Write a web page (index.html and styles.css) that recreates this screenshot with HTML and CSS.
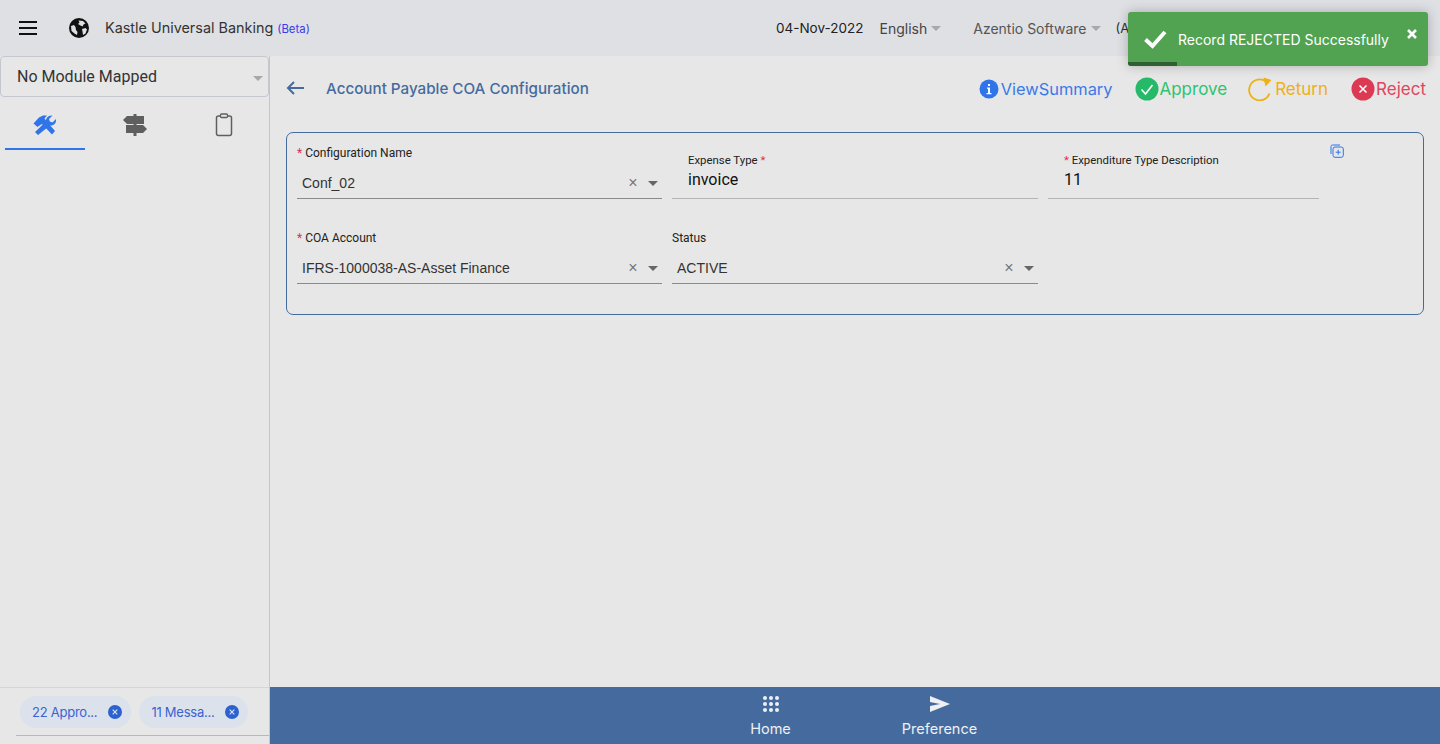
FILE: index.html
```html
<!DOCTYPE html>
<html lang="en">
<head>
<meta charset="utf-8">
<title>Account Payable COA Configuration</title>
<link rel="stylesheet" href="styles.css">
</head>
<body>
<header class="topbar">
  <button class="hamburger" aria-label="Menu"><span></span><span></span><span></span></button>
  <svg class="globe" viewBox="0 0 20 20" width="20" height="20"><circle cx="10" cy="10" r="10" fill="#111"/><path d="M2 8l3-1 1.500 2 .5 3 1.500 2-.5 3-2.500-1.500L2.500 13zM9.500 2.500l4.500.5 2.500 2.500-2 1-1 2-2-1-2.500-1.500 1.500-1.500zM13 11l3.500-1 1.500 1.500-1.500 4-2.500 1.500-.5-3.500z" fill="#dfe0e4"/></svg>
  <div class="brand">Kastle Universal Banking <span class="beta">(Beta)</span></div>
  <div class="topright">
    <span class="date">04-Nov-2022</span>
    <span class="lang">English<i class="caret"></i></span>
    <span class="org">Azentio Software<i class="caret"></i></span>
    <span class="more">(A</span>
  </div>
</header>
<div class="toast">
  <svg class="tick" viewBox="0 0 24 20" width="24" height="20"><path d="M2.500 10.500l7 6.500L22 3" fill="none" stroke="#fff" stroke-width="4"/></svg>
  <span class="toast-text">Record REJECTED Successfully</span>
  <svg class="toast-x" viewBox="0 0 10 10" width="10" height="10"><path d="M1 1l8 8M9 1l-8 8" stroke="#fff" stroke-width="2.600"/></svg>
  <div class="toast-progress"></div>
</div>
<div class="layout">
  <aside class="sidebar">
    <div class="module">No Module Mapped<i class="caret caret-module"></i></div>
    <nav class="tabs">
      <div class="tab tab-active">
        <svg viewBox="0 0 24 22" width="24" height="22"><g fill="#2f74e8"><path d="M0.500 9.500L6 3.500 10 1.500 14 1.500 11.500 4.500 13 6.500 22 17 19 20.500 9 10 6.500 11.500 4.500 13z"/><path d="M5 21l-3-3L13 7.500c-.5-3 2-6.500 6.500-6L16 5l.8 2.600 2.700.8L23 5c.8 4-2.500 7-6 6.500z"/></g></svg>
      </div>
      <div class="tab">
        <svg viewBox="0 0 24 22" width="24" height="22"><path fill="#5f5f5f" d="M10.500 0h3v2H21v8h-7.500v1H20l4 4-4 4h-6.500v3h-3v-3H3v-8h7.500v-1H4L0 6l4-4h6.500z"/></svg>
      </div>
      <div class="tab tab-clip">
        <svg viewBox="0 0 18 24" width="18" height="24"><rect x="1.500" y="3" width="15" height="19.500" rx="2" fill="none" stroke="#5f5f5f" stroke-width="1.500"/><rect x="5.500" y="1" width="7" height="3.500" rx="1" fill="#e7e7e7" stroke="#5f5f5f" stroke-width="1.300"/></svg>
      </div>
    </nav>
    <div class="side-spacer"></div>
    <div class="chips">
      <span class="chip">22 Appro...<i class="chip-x"><svg viewBox="0 0 6 6" width="6" height="6"><path d="M.7.7l4.600 4.600M5.300.7L.7 5.300" stroke="#dbe2ec" stroke-width="1.200"/></svg></i></span>
      <span class="chip">11 Messa...<i class="chip-x"><svg viewBox="0 0 6 6" width="6" height="6"><path d="M.7.7l4.600 4.600M5.300.7L.7 5.300" stroke="#dbe2ec" stroke-width="1.200"/></svg></i></span>
    </div>
  </aside>
  <div class="main">
    <section class="content">
      <div class="titlebar">
        <svg class="back" viewBox="0 0 18 14" width="18" height="14"><path d="M18 7H2M8 1L2 7l6 6" fill="none" stroke="#456b9e" stroke-width="2"/></svg>
        <h1 class="title">Account Payable COA Configuration</h1>
        <div class="actions">
          <span class="action a-blue"><svg viewBox="0 0 20 20" width="20" height="20"><circle cx="10" cy="10" r="9.500" fill="#2f74e8"/><path d="M8 8.500h3V14h1.500v1.300h-5V14H9V9.800H8zM9 5h2v2H9z" fill="#fff"/></svg>ViewSummary</span>
          <span class="action a-green"><svg viewBox="0 0 24 24" width="24" height="24"><circle cx="12" cy="12" r="11.500" fill="#25b968"/><path d="M6.500 12.500l4 4.500 7-9" fill="none" stroke="#fff" stroke-width="1.600"/></svg>Approve</span>
          <span class="action a-amber"><svg viewBox="0 0 24 24" width="24" height="24"><path d="M21 16A10.500 10.500 0 1 1 17.500 4" fill="none" stroke="#eeb111" stroke-width="1.800" transform="translate(.5 .5)"/><path d="M15.500 .5l8 2.500-6 6.500z" fill="#eeb111"/></svg>Return</span>
          <span class="action a-red"><svg viewBox="0 0 24 24" width="24" height="24"><circle cx="12" cy="12" r="11.500" fill="#dc3a52"/><path d="M8.500 8.500l7 7M15.500 8.500l-7 7" stroke="#fff" stroke-width="1.500"/></svg>Reject</span>
        </div>
      </div>
      <form class="panel">
        <svg class="copy" viewBox="0 0 14 14" width="14" height="14"><rect x="3" y="3" width="10.300" height="10.300" rx="2" fill="#e7e7e7" stroke="#2f74e8"/><path d="M1 10V2.500A1.500 1.500 0 0 1 2.500 1H10M8.200 5.700v5M5.700 8.200h5" fill="none" stroke="#2f74e8"/></svg>
        <div class="field select">
          <label class="lbl"><b class="req">*</b> Configuration Name</label>
          <div class="ctl"><span class="val">Conf_02</span><span class="x">×</span><i class="arrow"></i></div>
        </div>
        <div class="field text">
          <label class="lbl">Expense Type <b class="req">*</b></label>
          <div class="ctl"><span class="val-big">invoice</span></div>
        </div>
        <div class="field text text-last">
          <label class="lbl"><b class="req">*</b> Expenditure Type Description</label>
          <div class="ctl"><span class="val-big">11</span></div>
        </div>
        <div class="field select">
          <label class="lbl"><b class="req">*</b> COA Account</label>
          <div class="ctl"><span class="val">IFRS-1000038-AS-Asset Finance</span><span class="x">×</span><i class="arrow"></i></div>
        </div>
        <div class="field select">
          <label class="lbl">Status</label>
          <div class="ctl"><span class="val">ACTIVE</span><span class="x">×</span><i class="arrow"></i></div>
        </div>
      </form>
    </section>
    <footer class="bottombar">
      <div class="bottom-item">
        <svg viewBox="0 0 18 18" width="18" height="18" fill="#eef0f3"><circle cx="3" cy="3" r="2"/><circle cx="9" cy="3" r="2"/><circle cx="15" cy="3" r="2"/><circle cx="3" cy="9" r="2"/><circle cx="9" cy="9" r="2"/><circle cx="15" cy="9" r="2"/><circle cx="3" cy="15" r="2"/><circle cx="9" cy="15" r="2"/><circle cx="15" cy="15" r="2"/></svg>
        <span>Home</span>
      </div>
      <div class="bottom-item">
        <svg viewBox="0 0 22 18" width="22" height="18" fill="#eef0f3"><path d="M1 1l20 8-20 8v-6l10-2-10-2z"/></svg>
        <span>Preference</span>
      </div>
    </footer>
  </div>
</div>
</body>
</html>
```
FILE: styles.css
```css
* { box-sizing: border-box; }
html, body { height: 100%; }
body {
  margin: 0;
  height: 744px;
  overflow: hidden;
  background: #e7e7e7;
  font-family: Roboto, "Liberation Sans", sans-serif;
  color: #222;
  display: flex;
  flex-direction: column;
}
.topbar {
  height: 56px;
  flex: none;
  background: #dfe0e4;
  display: flex;
  align-items: center;
  padding-left: 19px;
  overflow: hidden;
}
.hamburger {
  width: 18px;
  height: 14px;
  padding: 0;
  border: 0;
  background: none;
  display: flex;
  flex-direction: column;
  justify-content: space-between;
  margin-right: 32px;
}
.hamburger span { display: block; height: 2px; background: #111; }
.globe { margin-right: 16px; }
.brand { font-family: Inter, sans-serif; font-size: 14.400px; color: #333; margin-bottom: 2px; }
.beta { font-size: 11.400px; color: #3a3aea; }
.topright {
  margin-left: auto;
  display: flex;
  align-items: center;
  font-family: Inter, sans-serif;
  font-size: 14px;
  color: #444;
  white-space: nowrap;
  width: 664px;
}
.date { color: #222; font-size: 13.500px; margin-right: 16px; }
.lang { margin-right: 32px; }
.org { color: #555; margin-right: 15px; }
.more { color: #333; font-size: 13px; }
.caret {
  display: inline-block;
  width: 0;
  height: 0;
  border: 5px solid transparent;
  border-top-color: #a8a8aa;
  border-bottom-width: 0;
  margin-left: 4px;
  vertical-align: 3px;
}
.toast {
  position: absolute;
  left: 1128px;
  top: 12px;
  width: 300px;
  height: 54px;
  background: #51a351;
  border-radius: 3px;
  box-shadow: 0 0 12px rgba(0,0,0,.25);
  color: #fff;
  overflow: hidden;
  z-index: 5;
}
.tick { position: absolute; left: 15px; top: 17px; }
.toast-text { position: absolute; left: 50px; top: 18px; font-size: 14px; line-height: 20px; font-family: Inter, sans-serif; white-space: nowrap; }
.toast-x { position: absolute; left: 279px; top: 17px; }
.toast-progress { position: absolute; left: 0; bottom: 0; height: 4px; width: 49px; background: #2f5f33; }
.layout { flex: 1; display: flex; min-height: 0; }
.sidebar {
  width: 270px;
  flex: none;
  border-right: 1px solid #c6c6c8;
  display: flex;
  flex-direction: column;
}
.module {
  height: 41px;
  border: 1px solid #c4c7ce;
  border-radius: 4px;
  display: flex;
  align-items: center;
  padding-left: 16px;
  font-size: 16px;
  color: #333;
  width: 269px;
  position: relative;
}
.caret-module { position: absolute; right: 5px; top: 19px; margin: 0; }
.tabs { display: flex; padding: 0 0 0 5px; margin-top: 3px; }
.tab {
  flex: none;
  width: 80px;
  height: 50px;
  margin-right: 10px;
  display: flex;
  align-items: center;
  justify-content: center;
  padding-top: 2px;
  border-bottom: 2px solid transparent;
}
.tab-clip svg { margin-right: 2px; }
.tab-active { border-bottom-color: #2f74e8; }
.side-spacer { flex: 1; }
.chips {
  height: 57px;
  border-top: 1px solid #d6d6d6;
  display: flex;
  gap: 8px;
  align-items: flex-start;
  padding: 8px 0 0 20px;
  position: relative;
  font-family: Inter, sans-serif;
}
.chips::after {
  content: "";
  position: absolute;
  left: 16px;
  right: 0;
  top: 47px;
  border-top: 1px solid #b8b8b8;
}
.chip {
  height: 32px;
  background: #dbe2ec;
  border-radius: 16px;
  color: #3a62d0;
  font-size: 13px;
  letter-spacing: -0.250px;
  display: flex;
  align-items: center;
  padding: 0 9px 0 12px;
  white-space: nowrap;
}
.chip-x {
  width: 14px;
  height: 14px;
  margin-left: 11px;
  border-radius: 50%;
  background: #2c62cf;
  display: flex;
  align-items: center;
  justify-content: center;
}
.main { flex: 1; min-width: 0; display: flex; flex-direction: column; }
.content { flex: 1; padding: 0 16px; }
.titlebar { height: 76px; display: flex; align-items: center; padding-bottom: 12px; }
.back { margin-right: 22px; }
.title { margin: 0; font-family: Inter, sans-serif; font-size: 15.200px; font-weight: 500; color: #456b9e; }
.actions { margin-left: auto; display: flex; align-items: center; gap: 22px; font-family: Inter, sans-serif; font-size: 17px; }
.action { display: flex; align-items: center; margin-top: 2px; }
.action svg { flex: none; }
.a-blue { color: #3a7ae8; font-size: 16.400px; margin-right: 1px; }
.a-blue svg { margin-right: 2px; }
.a-green { color: #2cc46f; }
.a-amber { color: #eeb111; margin-left: -1px; }
.a-amber svg { margin-right: 3px; }
.a-red { color: #e0455c; margin-left: 1px; margin-right: -2px; }
.a-red svg { margin-right: 1px; }
.panel {
  position: relative;
  height: 183px;
  border: 1px solid #456b9e;
  border-radius: 7px;
  display: grid;
  grid-template-columns: 365px 366px 271px;
  grid-template-rows: 66px 53px;
  column-gap: 10px;
  row-gap: 32px;
  padding-left: 10px;
  align-content: start;
}
.copy { position: absolute; right: 79px; top: 11px; }
.field { display: flex; flex-direction: column; justify-content: flex-end; }
.lbl { font-size: 12px; line-height: 14px; color: #222; }
.req { font-weight: 400; color: #d9324e; }
.ctl {
  border-bottom: 1px solid #8a8a8a;
  display: flex;
  align-items: center;
  height: 31px;
  font-family: "Liberation Sans", Arial, sans-serif;
  font-size: 14px;
  color: #333;
}
.field.select .lbl { margin-bottom: 8px; }
.val { margin-left: 5px; flex: 1; }
.x { color: #777; font-size: 16px; width: 10px; text-align: center; margin-right: 10px; }
.arrow {
  width: 0;
  height: 0;
  border: 5px solid transparent;
  border-top-color: #666;
  border-bottom-width: 0;
  margin-right: 4px;
}
.field.text .ctl { border-bottom-color: #b4b4b4; height: 30px; padding-bottom: 8px; }
.field.text .lbl { padding-left: 16px; font-size: 11.400px; margin-bottom: 2px; }
.field.text .val-big { margin-left: 16px; font-family: Roboto, sans-serif; font-size: 16px; color: #111; }
.bottombar {
  height: 57px;
  flex: none;
  background: #456b9e;
  display: flex;
  padding-left: 448px;
  gap: 64px;
  color: #eef0f3;
  font-family: Inter, sans-serif;
  font-size: 14.500px;
}
.bottom-item {
  width: 105px;
  display: flex;
  flex-direction: column;
  align-items: center;
  padding-top: 8px;
  gap: 7px;
}
```
